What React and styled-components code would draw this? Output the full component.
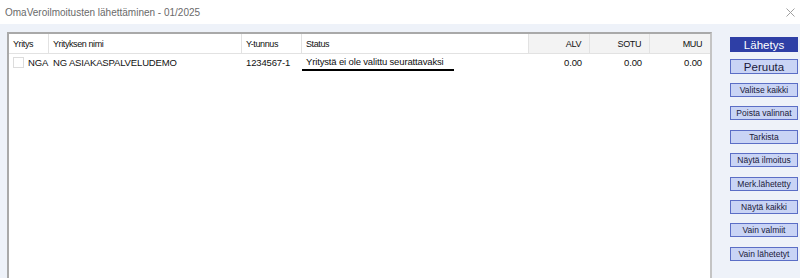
import React from "react"
import styled, { createGlobalStyle } from "styled-components"

const Global = createGlobalStyle`
  html, body { margin: 0; padding: 0; background: #eef2f9; }
  body { font-family: "Liberation Sans", Arial, sans-serif; overflow: hidden; }
`

const Window = styled.div`
  width: 800px;
  height: 278px;
  display: flex;
  flex-direction: column;
  background: #eef2f9;
`

const TitleBar = styled.div`
  height: 24px;
  flex: none;
  background: #ffffff;
  display: flex;
  align-items: center;
  justify-content: space-between;
  padding: 0 5px 0 5px;
  font-size: 10px;
  color: #6a6a6a;
`

const Body = styled.div`
  flex: 1;
  display: flex;
  padding: 8px 0 0 7px;
  min-height: 0;
`

const Grid = styled.div`
  width: 701px;
  flex: none;
  background: #ffffff;
  border: 2px solid #a9a9a9;
  border-bottom: none;
  border-right: 2px solid #c4c4c4;
`

const Row = styled.div`
  display: grid;
  grid-template-columns: 40px 193px 60px 227px 61px 60px 60px;
  height: ${p => (p.head ? "19px" : "16px")};
  border-bottom: ${p => (p.head ? "1px solid #e2e2e2" : "none")};
  font-size: ${p => (p.head ? "9px" : "9.5px")};
  letter-spacing: ${p => (p.head ? "-0.4px" : "-0.15px")};
  color: #111;
`

const Cell = styled.div`
  display: flex;
  align-items: ${p => (p.top ? "flex-start" : "center")};
  justify-content: ${p => (p.right ? "flex-end" : "flex-start")};
  padding: 0 ${p => (p.right ? "8px" : "0")} 0 4px;
  background: ${p => (p.shade ? "#f3f3f3" : "transparent")};
  border-right: ${p => (p.line ? "1px solid #e2e2e2" : "none")};
  white-space: nowrap;
`

const Check = styled.span`
  width: 9px;
  height: 9px;
  border: 1px solid #dcdcdc;
  margin: 0 4px 0 0;
  flex: none;
`

const Status = styled.span`
  display: block;
  line-height: 11px;
  padding: 2px 10px 2px 4px;
  margin-left: -4px;
  border-bottom: 2px solid #000;
`

const Side = styled.div`
  flex: 1;
  display: flex;
  flex-direction: column;
  align-items: center;
  padding: 5px 0 0 16px;
`

const Btn = styled.div`
  width: 66px;
  height: ${p => (p.big ? "13px" : "12px")};
  display: flex;
  align-items: center;
  justify-content: center;
  font-size: ${p => (p.big ? "11.5px" : "8.5px")};
  color: ${p => (p.primary ? "#ffffff" : "#1a1a3a")};
  background: ${p => (p.primary ? "#2e3fa6" : "#c9d4f5")};
  border: 1px solid ${p => (p.primary ? "#2e3fa6" : "#5b6ec6")};
  margin-bottom: ${p => p.gap};
  white-space: nowrap;
`

const columns = [
  { label: "Yritys", line: true },
  { label: "Yrityksen nimi", line: true },
  { label: "Y-tunnus", line: true },
  { label: "Status", line: true },
  { label: "ALV", right: true, shade: true, line: true },
  { label: "SOTU", right: true, shade: true, line: true },
  { label: "MUU", right: true, shade: true },
]

const buttons = ["Valitse kaikki", "Poista valinnat", "Tarkista", "Näytä ilmoitus", "Merk.lähetetty", "Näytä kaikki", "Vain valmiit", "Vain lähetetyt"]

export default function App() {
  return (
    <Window>
      <Global />
      <TitleBar>
        <span>OmaVeroilmoitusten lähettäminen - 01/2025</span>
        <svg width="9" height="9" viewBox="0 0 9 9">
          <path d="M0.5 0.5 L8.5 8.5 M8.5 0.5 L0.5 8.5" stroke="#a0a0a0" strokeWidth="1" fill="none" />
        </svg>
      </TitleBar>
      <Body>
        <Grid>
          <Row head>
            {columns.map(c => (
              <Cell key={c.label} right={c.right} shade={c.shade} line={c.line}>{c.label}</Cell>
            ))}
          </Row>
          <Row>
            <Cell><Check />NGA</Cell>
            <Cell>NG ASIAKASPALVELUDEMO</Cell>
            <Cell>1234567-1</Cell>
            <Cell top><Status>Yritystä ei ole valittu seurattavaksi</Status></Cell>
            <Cell right>0.00</Cell>
            <Cell right>0.00</Cell>
            <Cell right>0.00</Cell>
          </Row>
        </Grid>
        <Side>
          <Btn big primary gap="7px">Lähetys</Btn>
          <Btn big gap="9px">Peruuta</Btn>
          {buttons.map(b => <Btn key={b} gap="9.4px">{b}</Btn>)}
        </Side>
      </Body>
    </Window>
  )
}
